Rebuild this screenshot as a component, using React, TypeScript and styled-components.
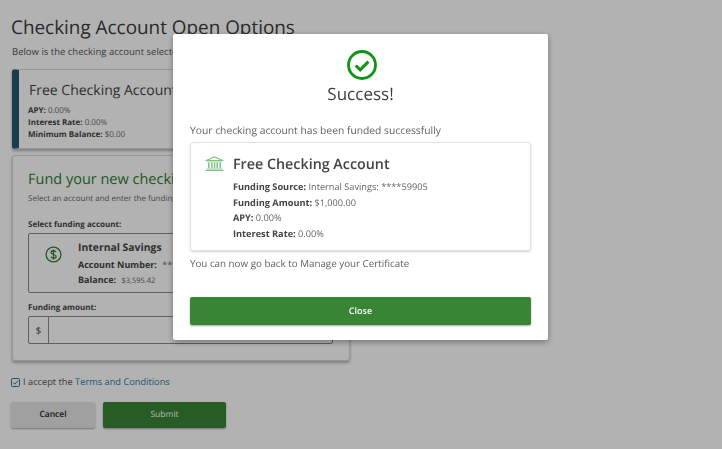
import React from "react";
import styled, { createGlobalStyle } from "styled-components";

const GlobalStyle = createGlobalStyle`
  html, body {
    margin: 0;
    padding: 0;
    height: 100%;
    background: #fff;
    overflow: hidden;
  }
  body {
    font-family: "Open Sans", "Liberation Sans", sans-serif;
    color: #444;
    text-rendering: geometricPrecision;
  }
`;

const Page = styled.div`
  width: 722px;
  height: 449px;
  box-sizing: border-box;
  padding: 15px 12px 0;
  overflow: hidden;
`;

const Title = styled.h1`
  margin: 0 0 0 -1px;
  font-size: 18.9px;
  line-height: 24px;
  font-weight: 400;
  color: #3c3c3c;
`;

const Lead = styled.p`
  margin: 6px 0 10px;
  font-size: 9.5px;
  line-height: 14px;
  color: #555;
`;

const Column = styled.div`
  width: 338px;
  display: flex;
  flex-direction: column;
  gap: 6px;
`;

const ProductCard = styled.section`
  box-sizing: border-box;
  height: 80px;
  padding: 11px 10px 0 9px;
  background: #fff;
  border: 1px solid #d8d8d8;
  border-left: 7px solid #235a6e;
  border-radius: 3px;
  box-shadow: 0 2px 3px rgba(0, 0, 0, 0.3);
`;

const ProductName = styled.h2`
  margin: 0 0 4px 1px;
  font-size: 14px;
  line-height: 20px;
  font-weight: 400;
  white-space: nowrap;
`;

const SmallLine = styled.div`
  font-size: 8px;
  line-height: 12.2px;
  color: #666;
  white-space: nowrap;
  b {
    font-weight: 700;
    color: #444;
  }
`;

const FundCard = styled.section`
  box-sizing: border-box;
  height: 206px;
  padding: 13px 16px 0 15px;
  background: #fff;
  border: 1px solid #d8d8d8;
  border-radius: 3px;
  box-shadow: 0 2px 3px rgba(0, 0, 0, 0.3);
`;

const FundTitle = styled.h2`
  margin: 0;
  font-size: 14.5px;
  line-height: 22px;
  font-weight: 400;
  color: #2e7d32;
  white-space: nowrap;
`;

const FundHint = styled.p`
  margin: 2px 0 14px;
  font-size: 8px;
  line-height: 12px;
  color: #666;
  white-space: nowrap;
`;

const FieldLabel = styled.div`
  font-size: 8px;
  line-height: 12px;
  font-weight: 700;
  color: #444;
`;

const AccountBox = styled.div`
  box-sizing: border-box;
  height: 60px;
  margin: 2px 0 9px;
  padding: 7px 0 0 16px;
  display: flex;
  gap: 16px;
  border: 1px solid #8a8a8a;
  border-radius: 2px;
`;

const DollarIcon = styled.svg`
  width: 17px;
  height: 17px;
  margin-top: 5px;
  flex: none;
`;

const AccountName = styled.div`
  font-size: 10.4px;
  line-height: 15px;
  font-weight: 700;
  margin-bottom: 1px;
`;

const AccountLine = styled.div`
  font-size: 9px;
  line-height: 15px;
  white-space: nowrap;
  color: #666;
  b {
    font-weight: 700;
    color: #444;
    margin-right: 3px;
  }
  small {
    font-size: 7.5px;
  }
`;

const AmountField = styled.div`
  margin-top: 2px;
  height: 26px;
  display: flex;
  border: 1px solid #8a8a8a;
  border-radius: 2px;
`;

const AmountPrefix = styled.span`
  width: 19px;
  display: flex;
  align-items: center;
  justify-content: center;
  border-right: 1px solid #8a8a8a;
  font-size: 9.5px;
  color: #444;
`;

const AcceptRow = styled.label`
  margin: 14px 0 0 -1px;
  display: flex;
  align-items: center;
  gap: 3px;
  font-size: 9.25px;
  line-height: 14px;
  color: #555;
  a {
    color: #2a7aa5;
    text-decoration: none;
  }
`;

const CheckBox = styled.svg`
  width: 9px;
  height: 9px;
  flex: none;
`;

const Actions = styled.div`
  margin: 13px 0 0 -1px;
  display: flex;
  gap: 8px;
`;

const Button = styled.button<{ $wide?: boolean; $primary?: boolean }>`
  box-sizing: border-box;
  width: ${(p) => (p.$wide ? "123px" : "84px")};
  height: 25.5px;
  padding: 0;
  border: 0;
  border-radius: 2px;
  font-family: inherit;
  font-size: 8.5px;
  font-weight: ${(p) => (p.$primary ? 400 : 600)};
  text-rendering: geometricPrecision;
  color: ${(p) => (p.$primary ? "#fff" : "#222")};
  background: ${(p) => (p.$primary ? "#388535" : "#e6e6e6")};
  box-shadow: 0 1px 2px rgba(0, 0, 0, 0.35);
`;

const Backdrop = styled.div`
  position: fixed;
  inset: 0;
  background: rgba(0, 0, 0, 0.3);
`;

const Modal = styled.div`
  position: fixed;
  left: 173px;
  top: 34px;
  box-sizing: border-box;
  width: 375px;
  height: 306px;
  padding: 16px 17px 0;
  background: #fff;
  border-radius: 2px;
  box-shadow: 0 2px 6px rgba(0, 0, 0, 0.35);
  display: flex;
  flex-direction: column;
`;

const SuccessIcon = styled.svg`
  width: 30px;
  height: 30px;
  align-self: center;
  margin-left: 2px;
`;

const SuccessTitle = styled.h2`
  margin: 2px 0 0;
  text-align: center;
  font-size: 17px;
  line-height: 24px;
  font-weight: 400;
  color: #3c3c3c;
`;

const ModalText = styled.p<{ $lead?: boolean }>`
  margin: ${(p) => (p.$lead ? "18px 0 0" : "0")};
  font-size: ${(p) => (p.$lead ? "10.3px" : "9.8px")};
  line-height: 14px;
  color: #5f5f5f;
  white-space: nowrap;
`;

const SummaryCard = styled.div`
  box-sizing: border-box;
  height: 109px;
  margin: 4px 0 6px;
  padding: 12px 14px 0;
  display: flex;
  gap: 9px;
  border: 1px solid #e2e2e2;
  border-radius: 3px;
  box-shadow: 0 1px 2px rgba(0, 0, 0, 0.18);
`;

const BankIcon = styled.svg`
  width: 19px;
  height: 15px;
  flex: none;
  margin-top: 1px;
`;

const SummaryName = styled.h3`
  margin: 0 0 4px;
  font-size: 14.3px;
  line-height: 20px;
  font-weight: 600;
  color: #444;
  white-space: nowrap;
`;

const SummaryLine = styled.div`
  font-size: 9.2px;
  line-height: 15.5px;
  color: #666;
  white-space: nowrap;
  b {
    font-weight: 700;
    color: #444;
  }
`;

const CloseButton = styled.button`
  margin-top: 26px;
  height: 28px;
  padding: 0 0 1px;
  border: 0;
  border-radius: 2px;
  background: #388535;
  color: #fff;
  font-family: inherit;
  font-size: 9px;
  font-weight: 600;
  text-rendering: geometricPrecision;
  box-shadow: 0 1px 2px rgba(0, 0, 0, 0.35);
`;

export default function App() {
  return (
    <>
      <GlobalStyle />
      <Page>
        <Title>Checking Account Open Options</Title>
        <Lead>Below is the checking account selected</Lead>
        <Column>
          <ProductCard>
            <ProductName>Free Checking Account</ProductName>
            <SmallLine>
              <b>APY:</b> 0.00%
            </SmallLine>
            <SmallLine>
              <b>Interest Rate:</b> 0.00%
            </SmallLine>
            <SmallLine>
              <b>Minimum Balance:</b> $0.00
            </SmallLine>
          </ProductCard>
          <FundCard>
            <FundTitle>Fund your new checking account</FundTitle>
            <FundHint>Select an account and enter the funding amount</FundHint>
            <FieldLabel>Select funding account:</FieldLabel>
            <AccountBox>
              <DollarIcon viewBox="0 0 24 24" fill="none" stroke="#2e7d32" strokeWidth="1.8">
                <circle cx="12" cy="12" r="10.5" />
                <path d="M15.5 8.5c-.6-1.2-2-1.8-3.5-1.8-2 0-3.5 1-3.5 2.6 0 3.4 7.2 2 7.2 5.4 0 1.7-1.6 2.6-3.7 2.6-1.6 0-3-.7-3.6-2M12 4.8v14.4" />
              </DollarIcon>
              <div>
                <AccountName>Internal Savings</AccountName>
                <AccountLine>
                  <b>Account Number:</b> ****59905
                </AccountLine>
                <AccountLine>
                  <b>Balance:</b> <small>$3,595.42</small>
                </AccountLine>
              </div>
            </AccountBox>
            <FieldLabel>Funding amount:</FieldLabel>
            <AmountField>
              <AmountPrefix>$</AmountPrefix>
            </AmountField>
          </FundCard>
        </Column>
        <AcceptRow>
          <CheckBox viewBox="0 0 12 12" fill="none" stroke="#2a6a85" strokeWidth="1.3">
            <rect x="0.7" y="0.7" width="10.6" height="10.6" rx="1.2" />
            <path d="M3 6l2.2 2.2L9.4 3.6" />
          </CheckBox>
          <span>
            I accept the <a href="#terms">Terms and Conditions</a>
          </span>
        </AcceptRow>
        <Actions>
          <Button>Cancel</Button>
          <Button $wide $primary>
            Submit
          </Button>
        </Actions>
      </Page>
      <Backdrop />
      <Modal>
        <SuccessIcon viewBox="0 0 30 30" fill="none" stroke="#0f9414">
          <circle cx="15" cy="15" r="13.5" strokeWidth="2.8" />
          <path d="M8.8 15.5l4.4 4.4L21.4 11.6" strokeWidth="3" />
        </SuccessIcon>
        <SuccessTitle>Success!</SuccessTitle>
        <ModalText $lead>Your checking account has been funded successfully</ModalText>
        <SummaryCard>
          <BankIcon viewBox="0 0 19 15" fill="#7cc482">
            <path d="M9.5 0.2L18.6 4.2V5.1H0.4V4.2ZM9.5 1.4L3.8 4.1H15.2Z" fillRule="evenodd" />
            <rect x="2" y="5.6" width="15" height="0.8" />
            <rect x="3" y="6.8" width="1.5" height="5.4" />
            <rect x="6.1" y="6.8" width="1.5" height="5.4" />
            <rect x="8.8" y="6.8" width="1.5" height="5.4" />
            <rect x="11.5" y="6.8" width="1.5" height="5.4" />
            <rect x="14.5" y="6.8" width="1.5" height="5.4" />
            <rect x="1.5" y="12.6" width="16" height="0.9" />
            <rect x="0.4" y="14" width="18.2" height="1" />
          </BankIcon>
          <div>
            <SummaryName>Free Checking Account</SummaryName>
            <SummaryLine>
              <b>Funding Source:</b> Internal Savings: ****59905
            </SummaryLine>
            <SummaryLine>
              <b>Funding Amount:</b> $1,000.00
            </SummaryLine>
            <SummaryLine>
              <b>APY:</b> 0.00%
            </SummaryLine>
            <SummaryLine>
              <b>Interest Rate:</b> 0.00%
            </SummaryLine>
          </div>
        </SummaryCard>
        <ModalText>You can now go back to Manage your Certificate</ModalText>
        <CloseButton>Close</CloseButton>
      </Modal>
    </>
  );
}
